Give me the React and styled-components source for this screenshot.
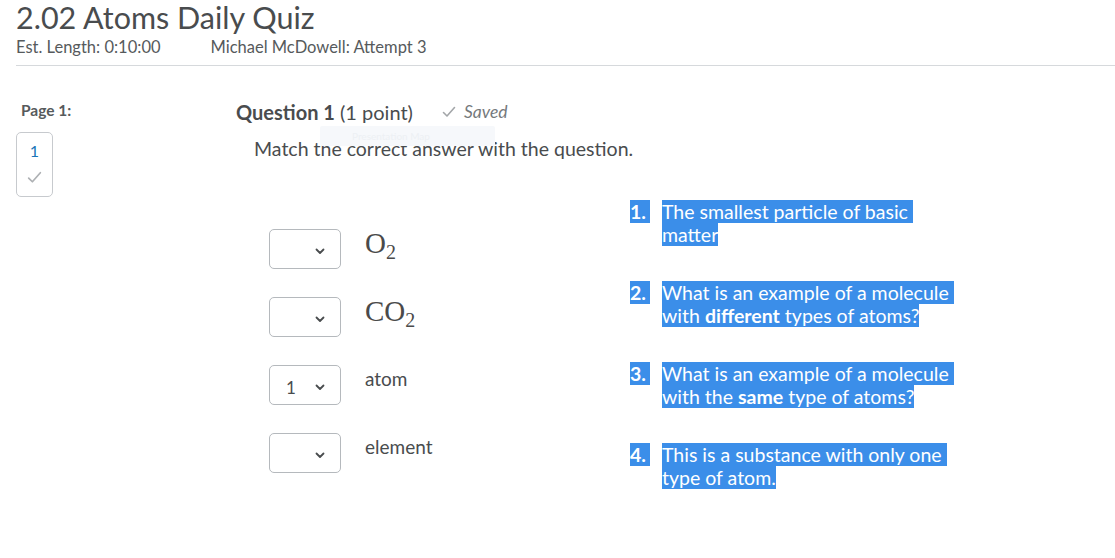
import React from 'react';
import styled, { createGlobalStyle } from 'styled-components';

const GlobalStyle = createGlobalStyle`
  body {
    margin: 0;
    background: #fff;
    font-family: Lato, "Open Sans", sans-serif;
    color: #494c4e;
  }
`;

const Page = styled.div`
  width: 1115px;
  height: 558px;
  overflow: hidden;
`;

const Header = styled.header`
  margin-left: 16px;
  border-bottom: 1px solid #d6d9dc;
  padding-bottom: 8px;
`;

const Title = styled.h1`
  margin: 0;
  padding-top: 1px;
  font-size: 30.5px;
  font-weight: 400;
  line-height: 32px;
  color: #494c4e;
`;

const Meta = styled.div`
  display: flex;
  gap: 50px;
  margin-top: 4px;
  font-size: 16.5px;
  line-height: 20px;
  color: #565a5c;
`;

const Body = styled.div`
  display: flex;
  padding: 35px 0 0 16px;
`;

const Sidebar = styled.aside`
  width: 220px;
  flex-shrink: 0;
`;

const PageLabel = styled.div`
  margin-left: 5px;
  font-size: 15.5px;
  font-weight: 700;
  line-height: 18px;
  color: #565a5c;
`;

const PageBox = styled.div`
  margin-top: 13px;
  width: 37px;
  height: 65px;
  border: 1px solid #c7cace;
  border-radius: 5px;
  display: flex;
  flex-direction: column;
  align-items: center;
  gap: 8px;
  padding-top: 8px;
  box-sizing: border-box;
`;

const PageNum = styled.span`
  color: #1a74b8;
  font-size: 16px;
  line-height: 20px;
`;

const Main = styled.main`
  flex: 1;
  position: relative;
`;

const QuestionHead = styled.div`
  display: flex;
  align-items: baseline;
  font-size: 20px;
  line-height: 22px;
`;

const Strong = styled.b`
  font-weight: 700;
`;

const Saved = styled.span`
  display: inline-flex;
  align-items: center;
  gap: 7px;
  margin-left: 28px;
  font-size: 17.5px;
  font-style: italic;
  color: #75797c;
`;

const Ghost = styled.div`
  position: absolute;
  left: 84px;
  top: 25px;
  width: 175px;
  height: 20px;
  background: #f6f8fb;
  border-radius: 2px;
  font-size: 10px;
  line-height: 20px;
  color: #edf0f4;
  padding-left: 32px;
  box-sizing: border-box;
`;

const Prompt = styled.p`
  margin: 14px 0 0 18px;
  font-size: 19.5px;
  line-height: 24px;
  color: #494c4e;
`;

const MatchArea = styled.div`
  display: flex;
  margin-top: 39px;
`;

const LeftCol = styled.div`
  width: 394px;
  padding-left: 33px;
  padding-top: 29px;
  box-sizing: border-box;
  display: flex;
  flex-direction: column;
  gap: 28px;
`;

const Row = styled.div`
  display: flex;
  align-items: flex-start;
  gap: 24px;
`;

const Select = styled.div`
  width: 72px;
  height: 40px;
  box-sizing: border-box;
  border: 1px solid #b5b9bd;
  border-radius: 5px;
  display: flex;
  align-items: center;
  justify-content: space-between;
  padding: 4px 15px 0 16px;
  font-size: 17px;
  color: #494c4e;
`;

const Formula = styled.span`
  font-family: "Liberation Serif", "DejaVu Serif", serif;
  font-size: 29px;
  line-height: 28px;
  color: #4a4a4a;
  sub {
    font-size: 20px;
    vertical-align: -6px;
    line-height: 0;
  }
`;

const Word = styled.span`
  font-size: 19px;
  line-height: 24px;
  margin-top: 2px;
  color: #494c4e;
`;

const RightCol = styled.ol`
  list-style: none;
  margin: 0;
  padding: 0;
  display: flex;
  flex-direction: column;
  gap: 35px;
`;

const Item = styled.li`
  display: flex;
  gap: 12px;
  font-size: 19.5px;
  line-height: 23px;
  width: 360px;
`;

const Mark = styled.span`
  background: #3b8ee9;
  color: #fff;
  ${p => p.$num && 'font-weight: 700; align-self: flex-start; width: 20px;'}
`;

const ItemText = styled.span`
  flex: 1;
`;

const Check = ({ size = 14, color = '#9a9da0' }) => (
  <svg width={size} height={size} viewBox="0 0 16 16" fill="none">
    <path d="M2.5 8.5 L6 12 L13.5 3.5" stroke={color} strokeWidth="1.6" strokeLinecap="round" strokeLinejoin="round" />
  </svg>
);

const Chevron = () => (
  <svg width="10" height="7" viewBox="0 0 10 7" fill="none">
    <path d="M1.5 1.5 L5 5 L8.5 1.5" stroke="#494c4e" strokeWidth="1.8" strokeLinecap="round" strokeLinejoin="round" />
  </svg>
);

const left = [
  { value: '', label: <Formula>O<sub>2</sub></Formula> },
  { value: '', label: <Formula>CO<sub>2</sub></Formula> },
  { value: '1', label: <Word>atom</Word> },
  { value: '', label: <Word>element</Word> },
];

const right = [
  <>The smallest particle of basic{'\u00a0'}<br />matter</>,
  <>What is an example of a molecule{'\u00a0'}<br />with <Strong>different</Strong> types of atoms?</>,
  <>What is an example of a molecule{'\u00a0'}<br />with the <Strong>same</Strong> type of atoms?</>,
  <>This is a substance with only one{'\u00a0'}<br />type of atom.</>,
];

export default function App() {
  return (
    <Page>
      <GlobalStyle />
      <Header>
        <Title>2.02 Atoms Daily Quiz</Title>
        <Meta>
          <span>Est. Length: 0:10:00</span>
          <span>Michael McDowell: Attempt 3</span>
        </Meta>
      </Header>
      <Body>
        <Sidebar>
          <PageLabel>Page 1:</PageLabel>
          <PageBox>
            <PageNum>1</PageNum>
            <Check size={17} color="#aeb1b4" />
          </PageBox>
        </Sidebar>
        <Main>
          <QuestionHead>
            <span><Strong>Question 1</Strong> (1 point)</span>
            <Saved><Check size={16} color="#a3a6a9" />Saved</Saved>
          </QuestionHead>
          <Ghost>Presentation Map</Ghost>
          <Prompt>Match the correct answer with the question.</Prompt>
          <MatchArea>
            <LeftCol>
              {left.map((r, i) => (
                <Row key={i}>
                  <Select>
                    <span>{r.value}</span>
                    <Chevron />
                  </Select>
                  {r.label}
                </Row>
              ))}
            </LeftCol>
            <RightCol>
              {right.map((t, i) => (
                <Item key={i}>
                  <Mark $num>{i + 1}.</Mark>
                  <ItemText><Mark>{t}</Mark></ItemText>
                </Item>
              ))}
            </RightCol>
          </MatchArea>
        </Main>
      </Body>
    </Page>
  );
}
